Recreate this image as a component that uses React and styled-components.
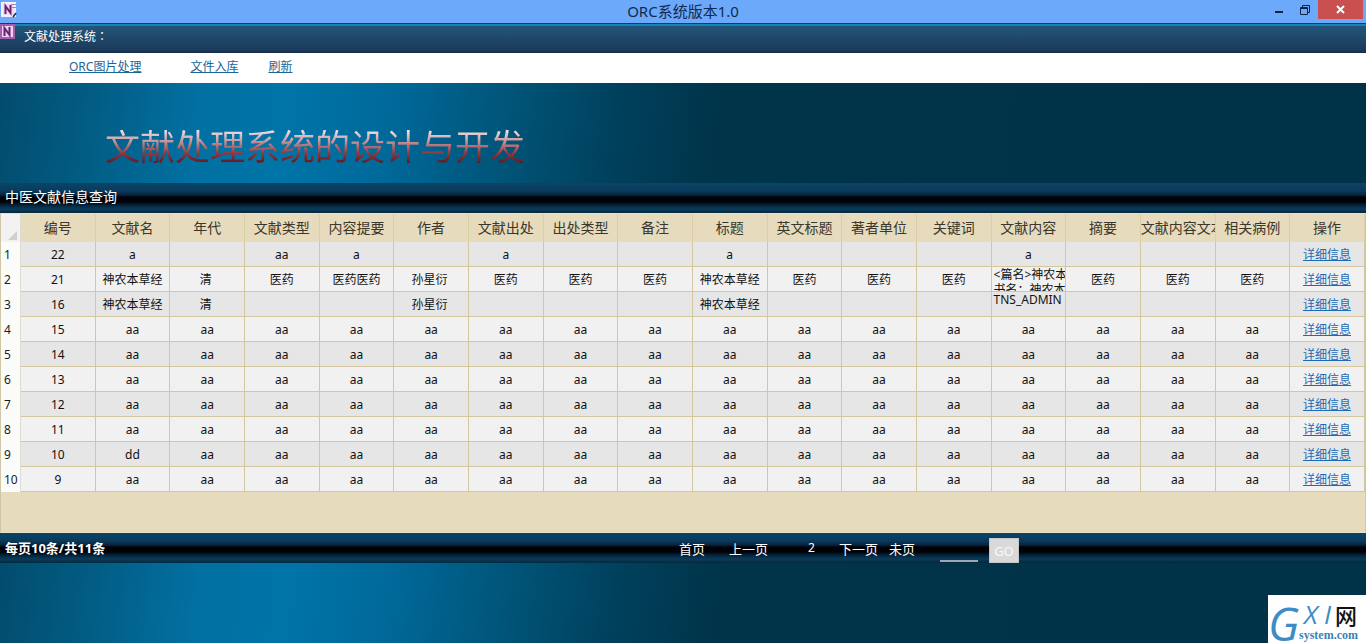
import React from 'react';
import styled, { createGlobalStyle, css } from 'styled-components';

const GlobalStyle = createGlobalStyle`
  * { box-sizing: border-box; }
  html, body { margin: 0; height: 100%; }
  #root { height: 100%; }
  body {
    font-family: "Noto Sans", "Noto Sans CJK SC", sans-serif;
    font-size: 12px;
    line-height: 18px;
    color: #1c1c1c;
    overflow: hidden;
  }
`;

const glow = css`
  background: linear-gradient(97deg,
    #024c6e 0, #025a80 80px, #0270a2 200px, #0074a8 290px,
    #00699a 390px, #005478 510px, #00405c 620px, #003449 720px, #003347 100%);
`;

const strip = css`
  background: linear-gradient(180deg,
    #0a4566 0, #0a3a5c 8px, #06243e 12px, #000208 14px, #000208 19px,
    #052238 22px, #0a3c5c 26px, #03293c 30px);
`;

const Window = styled.div`
  display: flex;
  flex-direction: column;
  width: 100%;
  min-height: 100%;
`;

const TitleBar = styled.header`
  display: grid;
  grid-template-columns: 1fr auto 1fr;
  height: 23px;
  background: #6ca9fb;
`;

const TitleIcon = styled.div`
  padding: 2px 1px;
  line-height: 0;
`;

const Title = styled.h1`
  margin: 0;
  font-size: 15px;
  font-weight: 400;
  line-height: 22px;
  color: #12294f;
`;

const WindowButtons = styled.div`
  display: flex;
  justify-content: flex-end;
  padding-right: 3px;
`;

const WindowButton = styled.button`
  display: flex;
  align-items: center;
  justify-content: center;
  width: ${(p) => (p.$close ? 45 : 26)}px;
  height: 19px;
  padding: 0;
  border: 0;
  color: ${(p) => (p.$close ? '#fff' : '#0f2547')};
  background: ${(p) => (p.$close ? '#c9504f' : 'transparent')};
`;

const AppBar = styled.div`
  display: flex;
  gap: 8px;
  height: 30px;
  border-top: 1px solid #0c3c80;
  box-shadow: inset 0 2px #1784b8;
  background: linear-gradient(180deg, #24587c, #1b3a5b 90%, #142c4a);
  color: #fff;
`;

const AppName = styled.span`
  line-height: 24px;
`;

const Colon = styled.span`
  font-family: "Noto Sans CJK TC", sans-serif;
`;

const Toolbar = styled.nav`
  display: flex;
  align-items: center;
  height: 30px;
  padding: 0 0 2px 69px;
  background: #fff;
`;

const Link = styled.a`
  color: ${(p) => (p.$tone === 'bar' ? '#1a6696' : '#1b6bb5')};
  text-decoration: underline;
  margin-right: ${(p) => p.$gap || 0}px;
`;

const Banner = styled.section`
  ${glow}
  height: 100px;
  padding: 38px 0 0 105px;
`;

const BannerTitle = styled.h2`
  display: inline-block;
  margin: 0;
  font-size: 35px;
  font-weight: 400;
  line-height: 52px;
  color: transparent;
  background: linear-gradient(180deg, #f4eef2 8px, #cfa5ab 18px, #93393f 32px, #601820 42px);
  background-clip: text;
  -webkit-background-clip: text;
`;

const SectionBar = styled.div`
  ${strip}
  height: 30px;
  padding-left: 5px;
  font-size: 14px;
  line-height: 28px;
  color: #fff;
`;

const GridArea = styled.div`
  height: 320px;
  background: #e6dbbc;
  border: 1px solid #cfc7a6;
  border-top-color: #e9e2c9;
  border-bottom-color: #e9e2c9;
`;

const Table = styled.table`
  width: 100%;
  table-layout: fixed;
  border-collapse: separate;
  border-spacing: 0;
`;

const HeadCell = styled.th`
  height: 28px;
  padding: 0;
  overflow: hidden;
  white-space: nowrap;
  text-align: ${(p) => (p.$clip ? 'left' : 'center')};
  font-size: 14px;
  font-weight: 400;
  line-height: 26px;
  color: #3b372c;
  background: #e6dbbc;
  border-right: 1px solid #dccfa6;
`;

const Corner = styled.td`
  width: 20px;
  padding: 0 2px 0 0;
  vertical-align: bottom;
  text-align: right;
  line-height: 0;
  background: #f3f2f0;
  border-right: 1px solid #dcdcd4;
`;

const Row = styled.tr`
  background: ${(p) => (p.$odd ? '#e7e6e6' : '#f2f1f1')};
`;

const RowNumber = styled.th`
  padding: 0 0 0 3px;
  text-align: left;
  font-weight: 400;
  background: #fbfbf9;
  border-right: 1px solid #dcdcd4;
`;

const Cell = styled.td`
  height: 25px;
  padding: ${(p) => (p.$long ? 0 : '2px 0 0')};
  text-align: center;
  white-space: nowrap;
  overflow: hidden;
  color: #111;
  border-right: 1px solid #d2c79e;
  border-bottom: 1px solid #d2c79e;
`;

const LongText = styled.div`
  height: 24px;
  padding-left: 2px;
  overflow: hidden;
  text-align: left;
  line-height: 15px;
  white-space: pre;
`;

const Pager = styled.footer`
  ${strip}
  display: grid;
  grid-template-columns: 1fr 1fr;
  height: 30px;
  color: #fff;
`;

const Summary = styled.strong`
  padding-left: 5px;
  font-size: 13px;
  line-height: 30px;
`;

const PagerNav = styled.form`
  display: flex;
  align-items: flex-start;
  margin-left: -4px;
  font-size: 13px;
  line-height: 32px;
`;

const PageButton = styled.button`
  padding: 0;
  border: 0;
  margin-right: ${(p) => p.$gap}px;
  font: inherit;
  color: inherit;
  background: none;
`;

const CurrentPage = styled.span`
  margin-right: 24px;
  font-size: 12px;
  line-height: 30px;
`;

const PageInput = styled.input`
  width: 38px;
  height: 24px;
  margin: 5px 11px 0 0;
  padding: 0;
  border: 0;
  border-bottom: 2px solid #9aa8b4;
  color: #fff;
  background: transparent;
`;

const GoButton = styled.button`
  width: 30px;
  height: 25px;
  margin-top: 5px;
  padding: 0;
  border: 1px solid #c4c6c8;
  font: 13px/22px "Noto Sans", sans-serif;
  color: #f8f8f8;
  background: #d9d9da;
`;

const Bottom = styled.section`
  ${glow}
  display: flex;
  flex: 1;
  min-height: 80px;
  align-items: flex-end;
  justify-content: flex-end;
`;

const Watermark = styled.svg`
  display: block;
  width: 98px;
  height: 48px;
  background: #fff;
`;

const AppIcon = ({ filled }) => (
  <svg width="16" height="17" viewBox="0 0 16 17" aria-hidden="true">
    <rect x="0" y="0" width="15" height="15" fill={filled ? '#a25fae' : '#f6eef8'} />
    <rect x="2" y="2" width="11" height="11" fill={filled ? '#ecd3ef' : '#f0dcf2'} />
    {!filled && <path d="M10 2.500h5M11 5.500h4" stroke="#a983b8" />}
    <path d="M4.500 12V4l5 7V3" fill="none" stroke="#6d1f73" strokeWidth="2" />
    {!filled && <path d="M12 15l3-4" stroke="#1c2c4c" strokeWidth="1.5" />}
  </svg>
);

const columns = ['编号', '文献名', '年代', '文献类型', '内容提要', '作者', '文献出处', '出处类型', '备注',
  '标题', '英文标题', '著者单位', '关键词', '文献内容', '摘要', '文献内容文本', '相关病例', '操作'];

const same = (id, name = 'aa') => [id, name, ...Array(15).fill('aa')];

const rows = [
  ['22', 'a', '', 'aa', 'a', '', 'a', '', '', 'a', '', '', '', 'a', '', '', ''],
  ['21', '神农本草经', '清\u2005', '医药', '医药医药', '孙星衍\u2005', '医药', '医药', '医药', '神农本草经',
    '医药', '医药', '医药', { text: '<篇名>神农本\n书名：神农本' }, '医药', '医药', '医药'],
  ['16', '神农本草经', '清\u2005', '', '', '孙星衍\u2005', '', '', '', '神农本草经', '', '', '',
    { text: 'TNS_ADMIN' }, '', '', ''],
  same('15'), same('14'), same('13'), same('12'), same('11'), same('10', 'dd'), same('9'),
];

export default function App() {
  return (
    <Window>
      <GlobalStyle />
      <TitleBar>
        <TitleIcon><AppIcon /></TitleIcon>
        <Title>ORC系统版本1.0</Title>
        <WindowButtons>
          <WindowButton aria-label="最小化">
            <svg width="10" height="10"><path d="M1 7h8" stroke="currentColor" strokeWidth="2" /></svg>
          </WindowButton>
          <WindowButton aria-label="还原">
            <svg width="12" height="12" fill="none" stroke="currentColor">
              <path d="M1.500 3.500h7v7h-7zM1 4.500h8M3.500 3V1.500h7v7H9" />
            </svg>
          </WindowButton>
          <WindowButton $close aria-label="关闭">
            <svg width="10" height="10"><path d="M1 1l7 7M8 1L1 8" stroke="currentColor" strokeWidth="2" /></svg>
          </WindowButton>
        </WindowButtons>
      </TitleBar>
      <AppBar>
        <AppIcon filled />
        <AppName>文献处理系统<Colon lang="zh-TW">：</Colon></AppName>
      </AppBar>
      <Toolbar>
        <Link href="#ocr" $tone="bar" $gap={49}>ORC图片处理</Link>
        <Link href="#import" $tone="bar" $gap={30}>文件入库</Link>
        <Link href="#refresh" $tone="bar">刷新</Link>
      </Toolbar>
      <Banner><BannerTitle>文献处理系统的设计与开发</BannerTitle></Banner>
      <SectionBar>中医文献信息查询</SectionBar>
      <GridArea>
        <Table>
          <thead>
            <tr>
              <Corner>
                <svg width="10" height="12"><path d="M9 1v9H0z" fill="#cfcfcf" /></svg>
              </Corner>
              {columns.map((name) => (
                <HeadCell key={name} scope="col" $clip={name.length > 5}>{name}</HeadCell>
              ))}
            </tr>
          </thead>
          <tbody>
            {rows.map((cells, r) => (
              <Row key={cells[0]} $odd={r % 2 === 0}>
                <RowNumber scope="row">{r + 1}</RowNumber>
                {cells.map((value, c) => (
                  <Cell key={columns[c]} $long={Boolean(value.text)}>
                    {value.text ? <LongText>{value.text}</LongText> : value}
                  </Cell>
                ))}
                <Cell><Link href={`#detail-${cells[0]}`}>详细信息</Link></Cell>
              </Row>
            ))}
          </tbody>
        </Table>
      </GridArea>
      <Pager>
        <Summary>每页10条/共11条</Summary>
        <PagerNav onSubmit={(e) => e.preventDefault()}>
          <PageButton type="button" $gap={24}>首页</PageButton>
          <PageButton type="button" $gap={40}>上一页</PageButton>
          <CurrentPage>2</CurrentPage>
          <PageButton type="button" $gap={11}>下一页</PageButton>
          <PageButton type="button" $gap={25}>未页</PageButton>
          <PageInput type="text" aria-label="页码" />
          <GoButton type="submit">GO</GoButton>
        </PagerNav>
      </Pager>
      <Bottom>
        <Watermark viewBox="0 0 98 48">
          <text x="0" y="46" fontFamily="Open Sans, sans-serif" fontStyle="italic" fontWeight="500" fontSize="46" fill="#3d8cc4">G</text>
          <text x="36" y="29" fontFamily="Open Sans, sans-serif" fontStyle="italic" fontSize="26" fill="#3d8cc4">X</text>
          <text x="56" y="29" fontFamily="Open Sans, sans-serif" fontStyle="italic" fontSize="26" fill="#3d8cc4">I</text>
          <text x="67" y="29" fontFamily="Noto Sans CJK SC, sans-serif" fontWeight="500" fontSize="22" fill="#111">网</text>
          <text x="31" y="44" fontFamily="Liberation Serif, serif" fontWeight="700" fontSize="12" fill="#3d7fb4">system.com</text>
        </Watermark>
      </Bottom>
    </Window>
  );
}
